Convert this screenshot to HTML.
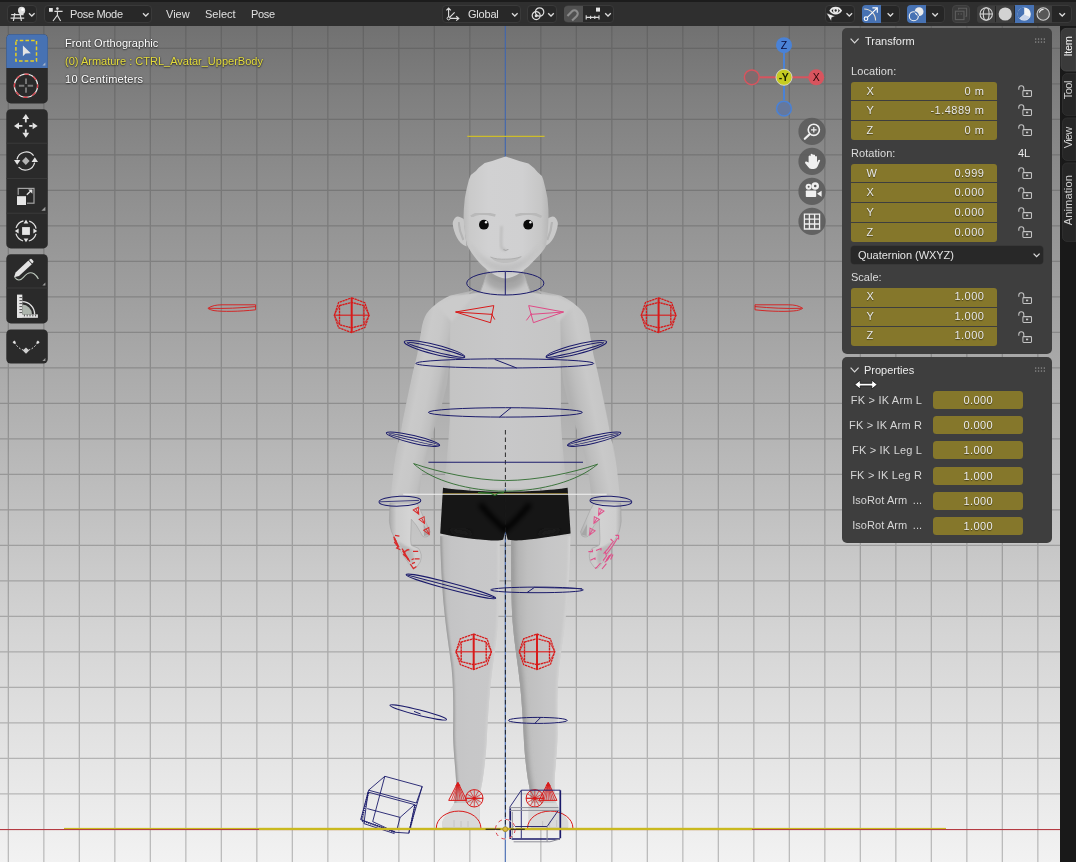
<!DOCTYPE html>
<html>
<head>
<meta charset="utf-8">
<title>Blender</title>
<style>
html,body{margin:0;padding:0;}
body{width:1076px;height:862px;overflow:hidden;position:relative;background:#808080;font-family:"Liberation Sans",sans-serif;font-size:12px;color:#e6e6e6;}
#vp{position:absolute;left:0;top:0;width:1076px;height:862px;}
#hdr{position:absolute;left:0;top:0;width:1076px;height:26px;background:#2f2f2f;}
.hb{position:absolute;top:5px;height:18px;background:#282828;border-radius:4px;box-sizing:border-box;border:1px solid #3a3a3a;}
.ht{position:absolute;top:7px;font-size:11px;line-height:14px;color:#e0e0e0;white-space:nowrap;}
.abs{position:absolute;}
.ht,.lbl,.vt,.fld,.pf,.pl,svg.abs{will-change:transform;}
.vt{font-size:11px;line-height:14px;color:#ffffff;white-space:nowrap;text-shadow:0 0 2px rgba(0,0,0,.6),0 1px 1.5px rgba(0,0,0,.55);}
/* toolbar */
.tg{position:absolute;left:6px;width:40px;background:#2b2b2b;border-radius:4px;}
/* N panel */
.pn{position:absolute;left:842px;width:210px;background:#3e3e3e;border-radius:5px;}
.lbl{position:absolute;font-size:11px;line-height:14px;color:#dcdcdc;white-space:nowrap;}
.fld{position:absolute;left:850.9px;width:146px;height:18px;background:#85772b;}
.fld .l{position:absolute;left:15.4px;top:1.7px;font-size:11px;text-shadow:0 1px 1px rgba(0,0,0,.45);line-height:14px;color:#e8e8e8;}
.fld .r{position:absolute;right:12.6px;top:1.7px;font-size:11px;letter-spacing:0.5px;line-height:14px;color:#e8e8e8;text-shadow:0 1px 1px rgba(0,0,0,.5);}
.fld.s2 .l,.fld.s2 .r{top:1.1px;}
.pf{position:absolute;left:933px;width:90px;height:17.7px;background:#85772b;border-radius:3.5px;text-align:center;font-size:11px;line-height:18px;letter-spacing:0.4px;text-indent:0.4px;color:#ececec;text-shadow:0 1px 1px rgba(0,0,0,.5);}
.pl{position:absolute;width:82px;left:842px;text-align:right;font-size:11px;line-height:14px;color:#d6d6d6;white-space:nowrap;}
#tabs{position:absolute;left:1060px;top:26px;width:16px;height:836px;background:#191919;}
.tab{position:absolute;left:1061px;width:15px;color:#d0d0d0;font-size:12px;}
.tab span{position:absolute;left:0;top:0;transform-origin:0 0;white-space:nowrap;line-height:15px;}
</style>
</head>
<body>
<svg id="vp" width="1076" height="862" viewBox="0 0 1076 862">
<defs>
<linearGradient id="bg" gradientUnits="userSpaceOnUse" x1="0" y1="0" x2="0" y2="862">
<stop offset="0.0000" stop-color="#6d6d6d"/>
<stop offset="0.0302" stop-color="#717171"/>
<stop offset="0.0464" stop-color="#747474"/>
<stop offset="0.1160" stop-color="#808080"/>
<stop offset="0.2378" stop-color="#919191"/>
<stop offset="0.4872" stop-color="#b2b2b2"/>
<stop offset="0.7309" stop-color="#d4d4d4"/>
<stop offset="0.9803" stop-color="#f0f0f0"/>
<stop offset="1.0000" stop-color="#f2f2f2"/>
</linearGradient>
</defs>
<rect x="0" y="0" width="1076" height="862" fill="url(#bg)"/>
<g stroke="#484848" stroke-opacity="0.31" stroke-width="1.3" fill="none">
<path d="M-27.15 26V862M8.35 26V862M43.85 26V862M79.35 26V862M114.85 26V862M150.35 26V862M185.85 26V862M221.35 26V862M256.85 26V862M292.35 26V862M327.85 26V862M363.35 26V862M398.85 26V862M434.35 26V862M469.85 26V862M540.85 26V862M576.35 26V862M611.85 26V862M647.35 26V862M682.85 26V862M718.35 26V862M753.85 26V862M789.35 26V862M824.85 26V862M860.35 26V862M895.85 26V862M931.35 26V862M966.85 26V862M1002.35 26V862M1037.85 26V862M1073.35 26V862M0 864.85H1076M0 793.85H1076M0 758.35H1076M0 722.85H1076M0 687.35H1076M0 651.85H1076M0 616.35H1076M0 580.85H1076M0 545.35H1076M0 509.85H1076M0 474.35H1076M0 438.85H1076M0 403.35H1076M0 367.85H1076M0 332.35H1076M0 296.85H1076M0 261.35H1076M0 225.85H1076M0 190.35H1076M0 154.85H1076M0 119.35H1076M0 83.85H1076M0 48.35H1076"/>
</g>
<line x1="505.3" y1="26" x2="505.3" y2="862" stroke="#3f66b0" stroke-width="1.1"/>
<line x1="467.3" y1="136.3" x2="544.6" y2="136.3" stroke="#cdbd2a" stroke-width="1.2"/>
<!--BODY_START-->
<defs>
<linearGradient id="gLegL" gradientUnits="userSpaceOnUse" x1="438" y1="0" x2="502" y2="0">
<stop offset="0" stop-color="#a6a6a6"/><stop offset="0.06" stop-color="#bababa"/><stop offset="0.2" stop-color="#c4c4c5"/><stop offset="0.5" stop-color="#c7c7c8"/><stop offset="0.9" stop-color="#c8c8c9"/><stop offset="1" stop-color="#cecece"/>
</linearGradient>
<linearGradient id="gLegR" gradientUnits="userSpaceOnUse" x1="502.6" y1="0" x2="437.6" y2="0">
<stop offset="0" stop-color="#9e9e9e"/><stop offset="0.1" stop-color="#b0b0b0"/><stop offset="0.3" stop-color="#bfbfbf"/><stop offset="0.6" stop-color="#c6c6c7"/><stop offset="0.9" stop-color="#c9c9c9"/><stop offset="1" stop-color="#d0d0d0"/>
</linearGradient>
<linearGradient id="gArmL" gradientUnits="userSpaceOnUse" x1="-2" y1="0" x2="32" y2="0" gradientTransform="translate(424 317) rotate(11.5)">
<stop offset="0" stop-color="#aeaeae"/><stop offset="0.07" stop-color="#c1c1c1"/><stop offset="0.3" stop-color="#cacaca"/><stop offset="0.6" stop-color="#c8c8c8"/><stop offset="0.85" stop-color="#c0c0c0"/><stop offset="1" stop-color="#b4b4b4"/>
</linearGradient>
<linearGradient id="gArmR" gradientUnits="userSpaceOnUse" x1="32" y1="0" x2="-2" y2="0" gradientTransform="translate(424 317) rotate(11.5)">
<stop offset="0" stop-color="#b2b2b2"/><stop offset="0.25" stop-color="#bebebe"/><stop offset="0.6" stop-color="#c9c9c9"/><stop offset="0.92" stop-color="#c6c6c6"/><stop offset="1" stop-color="#adadad"/>
</linearGradient>
<linearGradient id="gHandL" gradientUnits="userSpaceOnUse" x1="389" y1="0" x2="430" y2="0">
<stop offset="0" stop-color="#a8a8a8"/><stop offset="0.18" stop-color="#cccccc"/><stop offset="0.5" stop-color="#d4d4d4"/><stop offset="0.85" stop-color="#cacaca"/><stop offset="1" stop-color="#b0b0b0"/>
</linearGradient>
<linearGradient id="gHandR" gradientUnits="userSpaceOnUse" x1="430.6" y1="0" x2="388.6" y2="0">
<stop offset="0" stop-color="#b0b0b0"/><stop offset="0.2" stop-color="#c6c6c6"/><stop offset="0.5" stop-color="#d2d2d2"/><stop offset="0.85" stop-color="#cecece"/><stop offset="1" stop-color="#acacac"/>
</linearGradient>
<linearGradient id="gTorso" gradientUnits="userSpaceOnUse" x1="443" y1="0" x2="567.6" y2="0">
<stop offset="0" stop-color="#bababa"/><stop offset="0.07" stop-color="#c4c4c4"/><stop offset="0.5" stop-color="#c8c8c9"/><stop offset="0.93" stop-color="#c5c5c5"/><stop offset="1" stop-color="#bcbcbc"/>
</linearGradient>
<linearGradient id="gHead" gradientUnits="userSpaceOnUse" x1="463" y1="0" x2="548" y2="0">
<stop offset="0" stop-color="#bcbcbc"/><stop offset="0.08" stop-color="#cacaca"/><stop offset="0.3" stop-color="#d1d1d2"/><stop offset="0.7" stop-color="#d0d0d1"/><stop offset="0.92" stop-color="#c6c6c6"/><stop offset="1" stop-color="#b8b8b8"/>
</linearGradient>
<linearGradient id="gNeck" gradientUnits="userSpaceOnUse" x1="0" y1="272" x2="0" y2="300">
<stop offset="0" stop-color="#a8a8a8"/><stop offset="0.45" stop-color="#b8b8b8"/><stop offset="1" stop-color="#cacaca"/>
</linearGradient>
<filter id="b1" x="-20%" y="-20%" width="140%" height="140%"><feGaussianBlur stdDeviation="1.2"/></filter>
<filter id="b2" x="-30%" y="-30%" width="160%" height="160%"><feGaussianBlur stdDeviation="2.5"/></filter>
<filter id="b05" x="-10%" y="-10%" width="120%" height="120%"><feGaussianBlur stdDeviation="0.5"/></filter>
</defs>
<!-- limbs -->
<g>
<!-- leg -->
<path d="M440.2 536C440.6 560 442 585 443.6 604C446 630 449.4 650 451.6 668C453.6 690 453.4 712 453 734C453.4 752 455.4 768 456 780C456.4 790 455.4 798 454 804C450 812 443.6 817 442.6 822V828.6H479.8V822C480.4 814 479.4 808 479.6 800C480.4 790 482 784 482.8 779C485 764 486.4 750 487 734C488 716 489 700 490.6 684C492.6 664 496.4 644 498 622C499.4 600 499.6 570 499.6 540.6L470 537Z" fill="url(#gLegL)"/>
<!-- arm -->
<path d="M474 290.2L449.8 295.8C444 298.4 439.6 301.4 435 305C430.4 308.6 426.6 312.6 424.8 317.1C422.6 322 421.6 327 421 332C419.6 340 418.4 347 417.3 354.3L412.7 372.8L407.1 398.8L402.5 421L399.7 439.6L396 447.8L392.3 481.3L389.9 506H416L419.2 499.8C420 484 422.6 470 425.7 457C428 447 431 438 434 429.3L441.5 406.2L447 384L449.8 359.8L452 330L460 300Z" fill="url(#gArmL)"/>
<!-- hand -->
<path d="M389.9 503L389.4 521.3C389.8 525 390.6 528.6 391.5 531.7L395.7 540L400.9 551.6L407.1 561L412.3 567.7C413.8 568.6 415.4 568.4 416.5 567.2L420.2 562C421 559.6 421.4 557 421.2 554.7C420.6 552.2 419.8 550.2 418.6 548.4L411.3 545.3C410.6 542 410.6 538.6 410.8 535L411.3 519.2L416.5 525.5L422.8 536.4C425 537.6 427.4 537 429 535.4L430.1 531.7L424.9 520.3L420.2 509.8L416.4 503Z" fill="url(#gHandL)" stroke="#a0a0a0" stroke-opacity="0.7" stroke-width="0.8"/>
<path d="M396.6 541C400 548 405 556 411.6 565.6C414 561 414.6 556 412.6 549.6Z" fill="#b2b2b2" filter="url(#b1)" opacity="0.8"/>
<path d="M423.6 524L429 534.6L424 536Z" fill="#a6a6a6" filter="url(#b05)"/>
</g>
<g transform="translate(1010.6 0) scale(-1 1)">
<!-- leg -->
<path d="M440.2 536C440.6 560 442 585 443.6 604C446 630 449.4 650 451.6 668C453.6 690 453.4 712 453 734C453.4 752 455.4 768 456 780C456.4 790 455.4 798 454 804C450 812 443.6 817 442.6 822V828.6H479.8V822C480.4 814 479.4 808 479.6 800C480.4 790 482 784 482.8 779C485 764 486.4 750 487 734C488 716 489 700 490.6 684C492.6 664 496.4 644 498 622C499.4 600 499.6 570 499.6 540.6L470 537Z" fill="url(#gLegR)"/>
<!-- arm -->
<path d="M474 290.2L449.8 295.8C444 298.4 439.6 301.4 435 305C430.4 308.6 426.6 312.6 424.8 317.1C422.6 322 421.6 327 421 332C419.6 340 418.4 347 417.3 354.3L412.7 372.8L407.1 398.8L402.5 421L399.7 439.6L396 447.8L392.3 481.3L389.9 506H416L419.2 499.8C420 484 422.6 470 425.7 457C428 447 431 438 434 429.3L441.5 406.2L447 384L449.8 359.8L452 330L460 300Z" fill="url(#gArmR)"/>
<!-- hand -->
<path d="M389.9 503L389.4 521.3C389.8 525 390.6 528.6 391.5 531.7L395.7 540L400.9 551.6L407.1 561L412.3 567.7C413.8 568.6 415.4 568.4 416.5 567.2L420.2 562C421 559.6 421.4 557 421.2 554.7C420.6 552.2 419.8 550.2 418.6 548.4L411.3 545.3C410.6 542 410.6 538.6 410.8 535L411.3 519.2L416.5 525.5L422.8 536.4C425 537.6 427.4 537 429 535.4L430.1 531.7L424.9 520.3L420.2 509.8L416.4 503Z" fill="url(#gHandR)" stroke="#a0a0a0" stroke-opacity="0.7" stroke-width="0.8"/>
<path d="M396.6 541C400 548 405 556 411.6 565.6C414 561 414.6 556 412.6 549.6Z" fill="#b2b2b2" filter="url(#b1)" opacity="0.8"/>
<path d="M423.6 524L429 534.6L424 536Z" fill="#a6a6a6" filter="url(#b05)"/>
</g>
<clipPath id="cLegL"><path d="M440.2 536C440.6 560 442 585 443.6 604C446 630 449.4 650 451.6 668C453.6 690 453.4 712 453 734C453.4 752 455.4 768 456 780C456.4 790 455.4 798 454 804C450 812 443.6 817 442.6 822V828.6H479.8V822C480.4 814 479.4 808 479.6 800C480.4 790 482 784 482.8 779C485 764 486.4 750 487 734C488 716 489 700 490.6 684C492.6 664 496.4 644 498 622C499.4 600 499.6 570 499.6 540.6L470 537Z"/></clipPath>
<clipPath id="cLegR"><path d="M440.2 536C440.6 560 442 585 443.6 604C446 630 449.4 650 451.6 668C453.6 690 453.4 712 453 734C453.4 752 455.4 768 456 780C456.4 790 455.4 798 454 804C450 812 443.6 817 442.6 822V828.6H479.8V822C480.4 814 479.4 808 479.6 800C480.4 790 482 784 482.8 779C485 764 486.4 750 487 734C488 716 489 700 490.6 684C492.6 664 496.4 644 498 622C499.4 600 499.6 570 499.6 540.6L470 537Z" transform="translate(1010.6 0) scale(-1 1)"/></clipPath>
<g clip-path="url(#cLegL)">
<path d="M440.2 536C440.6 560 442 585 443.6 604C446 630 449.4 650 451.6 668C453.6 690 453.4 712 453 734C453.4 752 455.4 768 456 780C456.4 790 455.4 798 454 804" stroke="#9a9a9a" stroke-width="3.2" fill="none" filter="url(#b1)"/>
<path d="M499.6 540.6C499.6 570 499.4 600 498 622C496.4 644 492.6 664 490.6 684C489 700 488 716 487 734C486.4 750 485 764 482.8 779C482 784 480.4 790 479.6 800" stroke="#d2d2d2" stroke-width="2.4" fill="none" filter="url(#b1)"/>
</g>
<g clip-path="url(#cLegR)">
<path d="M499.6 540.6C499.6 570 499.4 600 498 622C496.4 644 492.6 664 490.6 684C489 700 488 716 487 734C486.4 750 485 764 482.8 779C482 784 480.4 790 479.6 800" transform="translate(1010.6 0) scale(-1 1)" stroke="#979797" stroke-width="6" fill="none" filter="url(#b2)"/>
<path d="M499.6 540.6C499.6 570 499.4 600 498 622C496.4 644 492.6 664 490.6 684C489 700 488 716 487 734C486.4 750 485 764 482.8 779C482 784 480.4 790 479.6 800" transform="translate(1010.6 0) scale(-1 1)" stroke="#a0a0a0" stroke-width="2.4" fill="none" filter="url(#b1)"/>
<path d="M440.2 536C440.6 560 442 585 443.6 604C446 630 449.4 650 451.6 668C453.6 690 453.4 712 453 734C453.4 752 455.4 768 456 780C456.4 790 455.4 798 454 804" transform="translate(1010.6 0) scale(-1 1)" stroke="#d4d4d4" stroke-width="2.6" fill="none" filter="url(#b1)"/>
</g>
<!-- feet -->
<path d="M454.4 803C450 811 443.8 816.6 442.2 822V827.6H479.8V822C480.2 815 479.6 809 479.8 803Z" fill="#d9d9d9" filter="url(#b05)"/>
<path d="M556.2 803C560.6 811 566.8 816.6 568.4 822V827.6H528.4V822C528 815 528.6 809 528.4 803Z" fill="#d9d9d9" filter="url(#b05)"/>
<path d="M454 820V827M461 821V827M468 821V827M556.6 820V827M549.6 821V827M542.6 821V827" stroke="#c2c2c2" stroke-width="0.9" filter="url(#b05)"/>
<path d="M442.4 826.8H479.8M528.4 826.8H568.2" stroke="#b0b0b0" stroke-width="1.2" filter="url(#b05)"/>
<!-- torso -->
<path d="M486.8 268L486.8 274.7C484.6 281 482 287 480 292.8L452 296.6C449.6 318 449.8 340 449.8 359.8C449.8 380 449.4 400 449.8 420C449 434 448 446 447 457C446 468 445 476 444.3 481.3L443 488.5H567.6L566.3 481.3C565.6 476 564.6 468 563.6 457C562.6 446 561.6 434 560.8 420C561.2 400 560.8 380 560.8 359.8C560.8 340 561 318 558.6 296.6L530.6 292.8C528.6 287 526 281 523.8 274.7L523.8 268Z" fill="url(#gTorso)"/>
<!-- shoulder caps to hide seams -->
<path d="M480 292.6L452 296.4L436 305L452 322L470 300Z" fill="#cbcbcb" filter="url(#b1)"/>
<path d="M530.6 292.6L558.6 296.4L574.6 305L558.6 322L540.6 300Z" fill="#cbcbcb" filter="url(#b1)"/>
<!-- neck shadow -->
<clipPath id="cNeck"><path d="M486.8 262H523.8V274.7C526 281 528.6 287 530.6 292.8L538 300H472.6L480 292.8C482 287 484.6 281 486.8 274.7Z"/></clipPath>
<g clip-path="url(#cNeck)">
<ellipse cx="505.3" cy="276" rx="21" ry="15" fill="#a6a6a6" filter="url(#b2)"/>
<ellipse cx="505.3" cy="274" rx="16" ry="9" fill="#9e9e9e" filter="url(#b1)"/>
</g>
<path d="M486.6 275C484.6 281 482.4 286.6 480.2 292.4M524 275C526 281 528.2 286.6 530.4 292.4" stroke="#b2b2b2" stroke-width="1" fill="none" filter="url(#b05)"/>
<!-- shorts -->
<path d="M443 487.8C460 490.4 480 491.6 505.3 491.8C530 491.6 550.6 490.4 567.6 487.8L570.6 533.6C556 536 540 538.6 524 540C516 540.6 510 540.6 507.6 539.6L505.4 530.6L503.2 539.6C500.6 540.8 494 540.8 486 540C470 538.8 454 536.4 440.2 533.4Z" fill="#141414" filter="url(#b05)"/>
<path d="M480 504C488 514 496 522 505.3 530C514 522 522 514 530 504" stroke="#060606" stroke-width="5" fill="none" filter="url(#b2)"/><path d="M452 530L470 534M558 530L540 534" stroke="#1e1e1e" stroke-width="4" fill="none" filter="url(#b2)"/>
<!-- head -->
<path d="M463.8 219C460 216.4 457.4 215.8 456 217C453.4 219.4 452.6 222 452.7 224C453.2 229 455 234 457 237.7C459 241.6 462 244.6 466.6 246.4Z" fill="#c9c9c9"/>
<path d="M546.8 219C550.6 216.4 553.2 215.8 554.6 217C557.2 219.4 558 222 557.9 224C557.4 229 555.6 234 553.6 237.7C551.6 241.6 548.6 244.6 544 246.4Z" fill="#c9c9c9"/>
<path d="M458.6 222C459 228 460.6 234 463.4 240" stroke="#b4b4b4" stroke-width="2.2" fill="none" filter="url(#b05)"/>
<path d="M552 222C551.6 228 550 234 547.2 240" stroke="#b4b4b4" stroke-width="2.2" fill="none" filter="url(#b05)"/>
<path d="M505.65 156.6L498.7 158.8L492.2 161L484.7 163L478.7 167.7L475.9 170.9L470.8 175.1L468.9 179.7L466.6 189L464.8 198.3L463.8 209.5L463.6 216.6C463.8 226 465 236 466.8 244.3C468.4 248 470.4 251 472.5 254C475.4 258 478.6 262 482.2 265.4C485.6 268.6 489.4 271.6 493.6 274.3C497 276.6 501 278.2 505.3 278.6C509.6 278.2 513.6 276.6 517.2 274.8C521.4 272 525.2 269 528.6 266.2C532.2 262.6 535.6 259 539 255.6C541.6 252.6 544 249.6 546 245.9C547.6 236 548.4 226 548.5 216.6L548.4 209.5L547.5 198.3L545.6 189L543.3 179.7L541.9 176L537.7 172.3L534 168.1L528.4 163.5L520 161.2L512.6 158.8Z" fill="url(#gHead)"/>
<!-- face shading -->
<path d="M468 240C472 252 480 262 492 270L505 274L518 270C530 262 538 252 542 240C536 252 524 262 505.3 264C486 262 474 252 468 240Z" fill="#bcbcbc" filter="url(#b2)" opacity="0.8"/>
<!-- eyebrows -->
<path d="M470.9 216.6C474 214.4 477 213.6 480.6 213.4C485.6 213.4 490.6 214 495.4 215.4" stroke="#b9b9b9" stroke-width="2.6" fill="none" filter="url(#b05)"/>
<path d="M515.4 215.4C520.2 214 525.2 213.4 530.2 213.4C533.8 213.6 536.8 214.4 541.6 216.8" stroke="#b9b9b9" stroke-width="2.6" fill="none" filter="url(#b05)"/>
<!-- eyes -->
<circle cx="483.9" cy="224.7" r="4.9" fill="#0a0a0a"/><circle cx="528.2" cy="224.7" r="4.9" fill="#0a0a0a"/>
<circle cx="486" cy="222.2" r="1.2" fill="#f4f4f4"/><circle cx="530.4" cy="222.2" r="1.2" fill="#f4f4f4"/>
<!-- nose -->
<path d="M501.6 226C501 236 500.6 242 501.4 247.4C502.6 249.4 504 250 505.8 250" stroke="#bdbdbd" stroke-width="2.4" fill="none" filter="url(#b1)"/>
<path d="M503.4 249.4L505.8 250.4L508.4 249.2" stroke="#a8a8a8" stroke-width="1.1" fill="none" filter="url(#b05)"/>
<!-- mouth -->
<path d="M490.4 257C495 259.2 500 259.6 505.8 259.4C511.6 259.4 516.6 258.6 521.4 256.6C517.6 261.4 512 263 505.8 263C499.6 263 494 261.6 490.4 257Z" fill="#bebebe" filter="url(#b05)"/>
<path d="M490.4 257C495 259 500 259.4 505.8 259.2C511.6 259.2 516.6 258.4 521.4 256.6" stroke="#aaaaaa" stroke-width="0.9" fill="none" filter="url(#b05)"/>
<!--BODY_END-->
<!--RIG_START-->
<path d="M505.4 430V829" stroke="#1a1a1a" stroke-width="0.9" stroke-dasharray="4.5 3" fill="none"/>
<path d="M403.2 494.2L606.7 494.2" stroke="#f2f2f2" stroke-width="1.1" fill="none"/>
<path d="M443 493.4H567.6" stroke="#b89a3a" stroke-width="0.8" opacity="0.8"/>
<path d="M428.4 462.3L583 462.3" stroke="#1b1b6b" stroke-width="1.1" fill="none"/>
<path d="M413.6 463.6C432 481 470 491 505.3 491.2C542 491 578 481 597.6 464.2M413.6 463.6C440 472.6 475 480.2 505.3 480.6C538 480.2 572 473 597.6 464.2" stroke="#2f6b2f" stroke-width="1" fill="none" opacity="0.9"/>
<path d="M478 492.6L491 493.4L495 495.4L498 493.2L504 492.6" fill="none" stroke="#2b7a2b" stroke-width="1.1"/>
<ellipse cx="505.3" cy="283.2" rx="38.6" ry="11.8" fill="none" stroke="#1b1b6b" stroke-width="1.0"/>
<path d="M505.3 271.6L505.3 295" stroke="#1b1b6b" stroke-width="1.0" fill="none"/>
<ellipse cx="434.5" cy="349.3" rx="31.2" ry="4.8" fill="none" stroke="#1b1b6b" stroke-width="1.0" transform="rotate(14 434.5 349.3)"/>
<ellipse cx="436.0" cy="349.9" rx="29.6" ry="2.2" fill="none" stroke="#1b1b6b" stroke-width="1.0" transform="rotate(14 436.0 349.9)"/>
<ellipse cx="576.4" cy="349.3" rx="31.2" ry="4.8" fill="none" stroke="#1b1b6b" stroke-width="1.0" transform="rotate(-14 576.4 349.3)"/>
<ellipse cx="574.9" cy="349.9" rx="29.6" ry="2.2" fill="none" stroke="#1b1b6b" stroke-width="1.0" transform="rotate(-14 574.9 349.9)"/>
<ellipse cx="504.8" cy="363.4" rx="88.9" ry="4.6" fill="none" stroke="#1b1b6b" stroke-width="1.0"/>
<path d="M494.7 359.4L516.7 368" stroke="#1b1b6b" stroke-width="1.0" fill="none"/>
<ellipse cx="505.4" cy="412.4" rx="77" ry="4.7" fill="none" stroke="#1b1b6b" stroke-width="1.0"/>
<path d="M499.4 417.2L511 407.7" stroke="#1b1b6b" stroke-width="1.0" fill="none"/>
<ellipse cx="413" cy="439.2" rx="27.4" ry="3.8" fill="none" stroke="#1b1b6b" stroke-width="1.0" transform="rotate(13.2 413 439.2)"/>
<ellipse cx="414.2" cy="439.6" rx="26" ry="1.3" fill="none" stroke="#1b1b6b" stroke-width="1.0" transform="rotate(13.2 414.2 439.6)"/>
<ellipse cx="594.2" cy="439.2" rx="27.4" ry="3.8" fill="none" stroke="#1b1b6b" stroke-width="1.0" transform="rotate(-13.2 594.2 439.2)"/>
<ellipse cx="593.0" cy="439.6" rx="26" ry="1.3" fill="none" stroke="#1b1b6b" stroke-width="1.0" transform="rotate(-13.2 593.0 439.6)"/>
<ellipse cx="399.9" cy="501.2" rx="20.9" ry="4.9" fill="none" stroke="#1b1b6b" stroke-width="1.0" transform="rotate(-2 399.9 501.2)"/>
<ellipse cx="610.9" cy="501.2" rx="20.9" ry="4.9" fill="none" stroke="#1b1b6b" stroke-width="1.0" transform="rotate(2 610.9 501.2)"/>
<path d="M380 501.8L419 500.4" stroke="#1b1b6b" stroke-width="0.8" fill="none"/>
<path d="M591 500.4L631 501.8" stroke="#1b1b6b" stroke-width="0.8" fill="none"/>
<ellipse cx="450.9" cy="586.4" rx="46.4" ry="3.2" fill="none" stroke="#1b1b6b" stroke-width="1.0" transform="rotate(14.8 450.9 586.4)"/>
<path d="M406.5 574.8L495.4 598" stroke="#1b1b6b" stroke-width="1.0" fill="none"/>
<ellipse cx="537" cy="589.9" rx="46.3" ry="2.8" fill="none" stroke="#1b1b6b" stroke-width="1.0"/>
<path d="M527 592.6L534.4 587.4" stroke="#1b1b6b" stroke-width="1.0" fill="none"/>
<path d="M534.4 587.4L582 588.6" stroke="#1b1b6b" stroke-width="0.8" fill="none"/>
<ellipse cx="418.2" cy="712.4" rx="29.2" ry="2.7" fill="none" stroke="#1b1b6b" stroke-width="1.0" transform="rotate(14.2 418.2 712.4)"/>
<path d="M414 711.4L420.6 714" stroke="#1b1b6b" stroke-width="1.0" fill="none"/>
<ellipse cx="537.8" cy="720.4" rx="29.4" ry="3" fill="none" stroke="#1b1b6b" stroke-width="1.0"/>
<path d="M535 723.2L540.6 717.6" stroke="#1b1b6b" stroke-width="1.0" fill="none"/>
<path d="M455.6 312L493.8 305.6L490.5 322.7ZM455.6 312L492.2 314.4M491.4 313.6L494.8 319.6" stroke="#d81a1a" stroke-width="1" fill="none"/>
<path d="M563.5 312L528.7 305.6L533.4 322.7ZM563.5 312L530.6 314.4M531.6 313.4L526.4 320.4" stroke="#e04a86" stroke-width="1" fill="none"/>
<path d="M351.7 297.8L364.8 302.7L369.1 315.2L364.9 327.4L351.7 332.6L338.6 327.7L334.3 315.2L338.6 302.5Z" stroke="#d81a1a" stroke-width="1.25" fill="none" stroke-dasharray="2.4 0.6"/>
<path d="M339.5 305.6L351.7 302.4L363.9 305.6L363.9 324.8L351.7 327.8L339.5 324.8Z" stroke="#d81a1a" stroke-width="1.35" fill="none" stroke-dasharray="2.4 0.5"/>
<path d="M351.7 297.8V332.6" stroke="#d81a1a" stroke-width="2"/>
<path d="M334.3 315.2H369.1" stroke="#d81a1a" stroke-width="1.5" opacity="0.75"/>
<path d="M339.5 305.6L334.3 315.2L339.5 324.8M363.9 305.6L369.1 315.2L363.9 324.8" stroke="#d81a1a" stroke-width="0.8" fill="none"/>
<path d="M658.6 297.8L671.7 302.7L676.0 315.2L671.8 327.4L658.6 332.6L645.5 327.7L641.2 315.2L645.5 302.5Z" stroke="#d81a1a" stroke-width="1.25" fill="none" stroke-dasharray="2.4 0.6"/>
<path d="M646.4 305.6L658.6 302.4L670.8 305.6L670.8 324.8L658.6 327.8L646.4 324.8Z" stroke="#d81a1a" stroke-width="1.35" fill="none" stroke-dasharray="2.4 0.5"/>
<path d="M658.6 297.8V332.6" stroke="#d81a1a" stroke-width="2"/>
<path d="M641.2 315.2H676.0" stroke="#d81a1a" stroke-width="1.5" opacity="0.75"/>
<path d="M646.4 305.6L641.2 315.2L646.4 324.8M670.8 305.6L676.0 315.2L670.8 324.8" stroke="#d81a1a" stroke-width="0.8" fill="none"/>
<path d="M473.7 634.0L487.1 639.0L491.5 651.8L487.2 664.3L473.7 669.6L460.3 664.6L455.9 651.8L460.3 638.8Z" stroke="#d81a1a" stroke-width="1.25" fill="none" stroke-dasharray="2.4 0.6"/>
<path d="M461.2 642.0L473.7 638.7L486.2 642.0L486.2 661.6L473.7 664.7L461.2 661.6Z" stroke="#d81a1a" stroke-width="1.35" fill="none" stroke-dasharray="2.4 0.5"/>
<path d="M473.7 634.0V669.6" stroke="#d81a1a" stroke-width="2"/>
<path d="M455.9 651.8H491.5" stroke="#d81a1a" stroke-width="1.5" opacity="0.75"/>
<path d="M461.2 642.0L455.9 651.8L461.2 661.6M486.2 642.0L491.5 651.8L486.2 661.6" stroke="#d81a1a" stroke-width="0.8" fill="none"/>
<path d="M537.0 634.0L550.4 639.0L554.8 651.8L550.5 664.3L537.0 669.6L523.6 664.6L519.2 651.8L523.6 638.8Z" stroke="#d81a1a" stroke-width="1.25" fill="none" stroke-dasharray="2.4 0.6"/>
<path d="M524.5 642.0L537.0 638.7L549.5 642.0L549.5 661.6L537.0 664.7L524.5 661.6Z" stroke="#d81a1a" stroke-width="1.35" fill="none" stroke-dasharray="2.4 0.5"/>
<path d="M537 634.0V669.6" stroke="#d81a1a" stroke-width="2"/>
<path d="M519.2 651.8H554.8" stroke="#d81a1a" stroke-width="1.5" opacity="0.75"/>
<path d="M524.5 642.0L519.2 651.8L524.5 661.6M549.5 642.0L554.8 651.8L549.5 661.6" stroke="#d81a1a" stroke-width="0.8" fill="none"/>
<path d="M207.9 308.3C212 305.6 216 304.9 222 304.8H255.6V309.8C240 311.6 222 311.8 214 310.6C211 310 209 309.2 207.9 308.3ZM209 308.3C225 308.8 240 308 255.6 306.6" stroke="#d81a1a" stroke-width="0.9" fill="none"/>
<path d="M802.7 308.3C798.6 305.6 794.6 304.9 788.6 304.8H755V309.8C770.6 311.6 788.6 311.8 796.6 310.6C799.6 310 801.6 309.2 802.7 308.3ZM801.6 308.3C785.6 308.8 770.6 308 755 306.6" stroke="#d81a1a" stroke-width="0.9" fill="none"/>
<path d="M457.9 782.3L448.7 800.4H466.7Z" stroke="#d81a1a" stroke-width="1" fill="none"/>
<path d="M457.9 783L451.4 800.4M457.9 783L453.7 800.4M457.9 783L455.7 800.4M457.9 783L457.9 800.4M457.9 783L460.09999999999997 800.4M457.9 783L462.09999999999997 800.4M457.9 783L464.4 800.4" stroke="#d81a1a" stroke-width="0.75" fill="none"/>
<path d="M455.29999999999995 786L457.9 782L460.5 786Z" fill="#d81a1a"/>
<circle cx="474.3" cy="798.3" r="8.7" stroke="#d81a1a" stroke-width="1" fill="none"/>
<path d="M474.3 798.3L483.0 798.3M474.3 798.3L481.8 802.6M474.3 798.3L478.7 805.8M474.3 798.3L474.3 807.0M474.3 798.3L469.9 805.8M474.3 798.3L466.8 802.6M474.3 798.3L465.6 798.3M474.3 798.3L466.8 793.9M474.3 798.3L469.9 790.8M474.3 798.3L474.3 789.6M474.3 798.3L478.7 790.8M474.3 798.3L481.8 793.9" stroke="#d81a1a" stroke-width="0.7" fill="none"/>
<circle cx="474.3" cy="798.3" r="1.6" fill="#d81a1a"/>
<path d="M465.6 798.3H483" stroke="#d81a1a" stroke-width="1"/>
<path d="M548.2 782.3L539.0 800.4H557.0Z" stroke="#d81a1a" stroke-width="1" fill="none"/>
<path d="M548.2 783L541.7 800.4M548.2 783L544.0 800.4M548.2 783L546.0 800.4M548.2 783L548.2 800.4M548.2 783L550.4000000000001 800.4M548.2 783L552.4000000000001 800.4M548.2 783L554.7 800.4" stroke="#d81a1a" stroke-width="0.75" fill="none"/>
<path d="M545.6 786L548.2 782L550.8000000000001 786Z" fill="#d81a1a"/>
<circle cx="534.8" cy="798.3" r="8.7" stroke="#d81a1a" stroke-width="1" fill="none"/>
<path d="M534.8 798.3L543.5 798.3M534.8 798.3L542.3 802.6M534.8 798.3L539.1 805.8M534.8 798.3L534.8 807.0M534.8 798.3L530.4 805.8M534.8 798.3L527.3 802.6M534.8 798.3L526.1 798.3M534.8 798.3L527.3 793.9M534.8 798.3L530.4 790.8M534.8 798.3L534.8 789.6M534.8 798.3L539.1 790.8M534.8 798.3L542.3 793.9" stroke="#d81a1a" stroke-width="0.7" fill="none"/>
<circle cx="534.8" cy="798.3" r="1.6" fill="#d81a1a"/>
<path d="M526 798.3H543.6" stroke="#d81a1a" stroke-width="1"/>
<path d="M436.3 828A22.3 16.9 0 0 1 480.9 828" stroke="#d81a1a" stroke-width="1" fill="none"/>
<path d="M527.6 828A22.65 16.9 0 0 1 572.9 828" stroke="#d81a1a" stroke-width="1" fill="none"/>
<path d="M384.8 776.3L422.2 786.5M384.8 776.3L368.6 790.2M368.6 790.2L416.3 803.0M368.1 792.1L414.9 804.7M422.2 786.5L416.3 803.0M422.2 786.5L409.4 829.9M384.8 776.3L372.7 821.6M368.6 790.2L360.7 819.7M360.7 819.7L395.5 832.3L408.9 833.2M408.9 833.2L409.4 829.9M414.9 804.7L408.9 833.2M367.2 808.6L400.1 817.4L414.0 805.1M400.1 817.4L397.3 828.1M372.7 821.6L395.5 832.3M363.9 823.6L394.5 833.6M368.1 792.1L363.9 823.6" stroke="#1b1b6b" stroke-width="0.9" fill="none"/>
<path d="M368.4 792.8L361.6 819.7M415.4 804.9L409.8 829.9M362.1 820.7L394.5 831.8" stroke="#1b1b6b" stroke-width="1.8" fill="none" stroke-dasharray="1.2 1"/>
<path d="M521.3 790.2L560.3 790.2M521.3 790.2L521.3 838.3M509.5 807.6L521.3 790.2M513.6 826.5L547.1 826.5L558.3 810.4" stroke="#1b1b6b" stroke-width="0.9" fill="none"/>
<path d="M560.3 790.2L560.3 838.3M510.2 808.3L510.2 839.0M511.6 839.0L559.9 839.0" stroke="#1b1b6b" stroke-width="1.7" fill="none"/>
<path d="M509.5 807.6L558.3 807.6M509.5 810.4L558.3 810.4M547.1 826.5L547.1 841.8M513.6 841.8L549.9 841.8L559.9 839.0M512.3 811.8L512.3 838.3" stroke="#8f8f98" stroke-width="1" fill="none"/>
<rect x="0" y="829" width="1076" height="1.1" fill="#b43a42"/>
<rect x="64" y="827.9" width="882" height="1.15" fill="#c9b91f"/>
<rect x="259" y="827.9" width="493" height="2.2" fill="#c9b91f"/>
<circle cx="505.3" cy="829.2" r="9.8" fill="none" stroke="#f4f4f4" stroke-width="1"/>
<circle cx="505.3" cy="829.2" r="9.8" fill="none" stroke="#d8414b" stroke-width="1" stroke-dasharray="3.85 3.85"/>
<path d="M485.6 829.2H500.4M510.4 829.2H524.8" stroke="#141414" stroke-width="1.1"/>
<circle cx="505.3" cy="829.2" r="2.5" fill="#d8b83a" stroke="#8a7420" stroke-width="0.6"/>
<path d="M-2.9 -2.61L2.9 -2.61L0 3.77ZM0 -2.61V3.77" transform="translate(417 510.9) rotate(-28)" stroke="#d82a2a" stroke-width="0.9" fill="none"/>
<path d="M-2.9 -2.61L2.9 -2.61L0 3.77ZM0 -2.61V3.77" transform="translate(422.8 520.3) rotate(-28)" stroke="#d82a2a" stroke-width="0.9" fill="none"/>
<path d="M-2.9 -2.61L2.9 -2.61L0 3.77ZM0 -2.61V3.77" transform="translate(427.5 531.2) rotate(-28)" stroke="#d82a2a" stroke-width="0.9" fill="none"/>
<path d="M-2.9 -2.61L2.9 -2.61L0 3.77ZM0 -2.61V3.77" transform="translate(600.3 511.9) rotate(28)" stroke="#e0508a" stroke-width="0.9" fill="none"/>
<path d="M-2.9 -2.61L2.9 -2.61L0 3.77ZM0 -2.61V3.77" transform="translate(595.6 520.3) rotate(28)" stroke="#e0508a" stroke-width="0.9" fill="none"/>
<path d="M-2.9 -2.61L2.9 -2.61L0 3.77ZM0 -2.61V3.77" transform="translate(591.4 531.7) rotate(28)" stroke="#e0508a" stroke-width="0.9" fill="none"/>
<path d="M393.6 536.6L396 541L394.6 542.6L398 546.6L396.6 548L400.4 549.8M395 535.4L399.4 536.2M402 548.6L405 553L403.6 554.6L407.4 558L409.8 561.6M404.6 551.6L408.6 549.4M410.4 564L413.4 568.6L416.4 566.6M412 563.6L415 562.4M406.4 549.8H409.4M413 551.4H418.2M414.6 558.8H419.6M411.6 559.6L414 558.8" stroke="#d82a2a" stroke-width="1.2" fill="none"/>
<path d="M394.2 538.4L398.8 547.4M402.8 550.6L408.6 560" stroke="#d82a2a" stroke-width="1.8" fill="none"/>
<path d="M615.4 535.4H618.6V539.6M617.6 538L612.6 546L606.6 554M613.6 541L608 548.6L603.6 553.6M610.6 539L612.6 541M611.6 553.6L607.6 560L604.6 562.4M609.6 555L606 560.6M613 554.6L610.6 559.6M606.4 563.6L602 569M600.6 563L596.6 567.6L595 568.4M588.4 551.6H592.4V549.6M596 550.6L601 548.6V550.6M590.4 560.2L595 558V560M605.4 552L606.4 556L603 560.6" stroke="#e0508a" stroke-width="1.1" fill="none"/>
<!--RIG_END-->
</svg>
<!--GIZMO_START-->
<svg class="abs" style="left:730px;top:30px" width="120" height="220" viewBox="0 0 120 220">
<!-- axis lines -->
<path d="M54 43.5V21" stroke="#4a82d6" stroke-width="2"/>
<path d="M54 51V70" stroke="#4a82d6" stroke-width="2"/>
<path d="M62 47.3H80" stroke="#d8545e" stroke-width="2"/>
<path d="M30 47.3H46" stroke="#d8545e" stroke-width="2"/>
<circle cx="21.8" cy="47.3" r="7.4" fill="#7e6c6e" stroke="#d8545e" stroke-width="1.5"/>
<circle cx="54" cy="78.6" r="7.4" fill="#66789c" stroke="#4a82d6" stroke-width="1.5"/>
<circle cx="54" cy="15.2" r="8" fill="#4a82d6"/>
<circle cx="86.2" cy="47.3" r="8" fill="#d8545e"/>
<circle cx="54" cy="47.3" r="8" fill="#c6cc22" stroke="#dcdccc" stroke-width="0.9"/>
<text x="54" y="19.2" font-size="10.5" text-anchor="middle" fill="#0a0a3a" font-family="Liberation Sans">Z</text>
<text x="86.3" y="51.3" font-size="10.5" text-anchor="middle" fill="#2a0608" font-family="Liberation Sans">X</text>
<text x="53.6" y="51.3" font-size="10.5" text-anchor="middle" fill="#1a2000" font-family="Liberation Sans" font-weight="bold" letter-spacing="-0.4">-Y</text>
<!-- nav buttons -->
<g fill="#5a5a5a" fill-opacity="0.86">
<circle cx="82" cy="101.4" r="13.6"/><circle cx="82" cy="131.4" r="13.6"/><circle cx="82" cy="161.4" r="13.6"/><circle cx="82" cy="191.4" r="13.6"/>
</g>
<!-- zoom -->
<circle cx="83.8" cy="99.8" r="5.6" fill="none" stroke="#f0f0f0" stroke-width="1.6"/>
<path d="M83.8 97V102.6M81 99.8H86.6" stroke="#f0f0f0" stroke-width="1.2"/>
<path d="M79.6 104.2L74.8 108.8" stroke="#f0f0f0" stroke-width="2.2" stroke-linecap="round"/>
<!-- hand -->
<path d="M76.4 131.6L78.6 132.6V126.2Q79.6 125 80.6 126.2V124.4Q81.7 123.2 82.8 124.4V125Q83.9 123.8 85 125V126.4Q86 125.4 87 126.6V132.4L88.2 130.2Q89.6 129.2 90.2 130.6L87.6 136.6Q86.6 139 84 139H81.6Q79.4 139 78.2 137L75 133Q75 131.4 76.4 131.6Z" fill="#f0f0f0"/>
<!-- camera -->
<circle cx="78.6" cy="156.8" r="3" fill="#f0f0f0"/><circle cx="85.2" cy="156" r="3.8" fill="#f0f0f0"/>
<rect x="75.8" y="160.4" width="10.4" height="6.6" rx="0.8" fill="#f0f0f0"/>
<path d="M87 163.8L91.6 160.8V166.8Z" fill="#f0f0f0"/>
<circle cx="78.6" cy="156.8" r="1" fill="#5a5a5a"/><circle cx="85.2" cy="156" r="1.3" fill="#5a5a5a"/>
<!-- grid -->
<path d="M74.4 184.2H89.6V199H74.4ZM79.4 184.2V199M84.6 184.2V199M74.4 189.2H89.6M74.4 194H89.6" stroke="#f0f0f0" stroke-width="1.3" fill="none"/>
</svg>
<!--GIZMO_END-->
<!--TOOLBAR_START-->
<!-- viewport text -->
<div class="abs vt" style="left:65.2px;top:36px;letter-spacing:0.06px">Front Orthographic</div>
<div class="abs vt" style="left:65.2px;top:54px;color:#e4dc3c">(0) Armature : CTRL_Avatar_UpperBody</div>
<div class="abs vt" style="left:65.2px;top:72px;letter-spacing:0.27px">10 Centimeters</div>
<!-- toolbar -->
<svg class="abs" style="left:0;top:26px" width="60" height="345" viewBox="0 26 60 345">
<g fill="#2a2a2a">
<rect x="6.3" y="34.2" width="41.5" height="69.2" rx="4.5"/>
<rect x="6.3" y="109.2" width="41.5" height="139.2" rx="4.5"/>
<rect x="6.3" y="254.2" width="41.5" height="69.2" rx="4.5"/>
<rect x="6.3" y="329.4" width="41.5" height="34.1" rx="4.5"/>
</g>
<path d="M6.3 68V38.7A4.5 4.5 0 0 1 10.8 34.2H43.3A4.5 4.5 0 0 1 47.8 38.7V68Z" fill="#4772b3"/>
<path d="M6.3 143.2H47.8M6.3 178.4H47.8M6.3 213.2H47.8M6.3 288H47.8" stroke="#3c3c3c" stroke-width="0.9"/>
<!-- select box -->
<rect x="15.9" y="40.6" width="20.6" height="20.4" fill="none" stroke="#e6cf22" stroke-width="1.5" stroke-dasharray="3.6 2.07" stroke-dashoffset="1.8"/>
<path d="M22.9 45.6V56.2L25.6 53.6L30.8 53.3Z" fill="#e4e4e4"/>
<path d="M45.4 65.6H42.4L45.4 62.6Z" fill="#a9b4c8"/>
<!-- cursor -->
<circle cx="26" cy="85.7" r="11.6" fill="none" stroke="#ececec" stroke-width="1.3"/>
<circle cx="26" cy="85.7" r="11.6" fill="none" stroke="#d8414b" stroke-width="1.3" stroke-dasharray="4.55 4.56" stroke-dashoffset="2"/>
<path d="M26 78.6V84M26 87.4V92.8M18.9 85.7H24.3M27.7 85.7H33.1" stroke="#7a7a7a" stroke-width="1.9"/>
<!-- move -->
<g fill="#e4e4e4">
<path d="M25.8 114L29.2 119H22.4Z"/><path d="M25.8 137.8L29.2 132.8H22.4Z"/><path d="M14 125.9L19 122.5V129.3Z"/><path d="M37.6 125.9L32.6 122.5V129.3Z"/>
<rect x="24.9" y="119" width="1.8" height="3.4"/><rect x="24.9" y="129.4" width="1.8" height="3.4"/><rect x="19" y="125" width="3.4" height="1.8"/><rect x="29.2" y="125" width="3.4" height="1.8"/>
</g>
<!-- rotate -->
<path d="M17 159.4A9.4 9.4 0 0 1 33.6 155.6" stroke="#e4e4e4" stroke-width="1.2" fill="none"/>
<path d="M34.6 162.6A9.4 9.4 0 0 1 18.6 167.2" stroke="#e4e4e4" stroke-width="1.2" fill="none"/>
<path d="M14 160H20.4L17.2 164.8Z" fill="#e4e4e4"/><path d="M31.6 162H38L34.8 157.2Z" fill="#e4e4e4"/>
<path d="M25.8 157L29.6 161L25.8 165L22 161Z" fill="#b4b4b4"/>
<!-- scale -->
<rect x="18.2" y="188.4" width="15.8" height="14.8" fill="none" stroke="#a4a4a4" stroke-width="1.2"/>
<rect x="15.6" y="194.8" width="11.4" height="11.4" fill="#2a2a2a"/>
<rect x="17" y="196.2" width="9" height="8.8" fill="#e6e6e6"/>
<path d="M26.8 194.8L31 190.8" stroke="#e4e4e4" stroke-width="1.3"/>
<path d="M28.2 189.6H32.4V193.8Z" fill="#e4e4e4"/>
<path d="M45.4 210.8H41.4L45.4 206.8Z" fill="#9a9a9a"/>
<!-- transform -->
<circle cx="26" cy="231" r="10.4" fill="none" stroke="#e4e4e4" stroke-width="1.2" stroke-dasharray="10.4 5.94" stroke-dashoffset="-2.97"/>
<rect x="22.1" y="227.1" width="7.8" height="7.8" fill="#e6e6e6"/>
<g fill="#e4e4e4"><path d="M26 219.8L28.4 223.6H23.6Z"/><path d="M26 242.2L28.4 238.4H23.6Z"/><path d="M14.8 231L18.6 228.6V233.4Z"/><path d="M37.2 231L33.4 228.6V233.4Z"/></g>
<!-- annotate -->
<path d="M14.6 277.2C17 280.6 20.4 281 23.4 277.4C26.6 273.4 30.6 271.6 34 273.8C36.4 275.4 37.6 277.4 38.4 279" stroke="#bcc8bc" stroke-width="1.1" fill="none"/>
<path d="M15.6 272.4L28.4 260.6L31.8 264.2L19 276L14 277.2Z" fill="#e4e4e4"/>
<path d="M29 260L30 259.2A1.4 1.4 0 0 1 32 259.4L33.2 260.8A1.4 1.4 0 0 1 33 262.8L32.2 263.6Z" fill="#e4e4e4"/>
<path d="M45.4 285.6H42.4L45.4 282.6Z" fill="#9a9a9a"/>
<!-- measure -->
<rect x="17" y="294.6" width="5.3" height="23" fill="#e4e4e4"/>
<rect x="17" y="314.4" width="20.9" height="3.4" fill="#e4e4e4"/>
<path d="M22.3 304.6A10 10 0 0 1 32 314.4H22.3Z" fill="#aeb6ae"/>
<path d="M22.3 301.6A12.6 12.6 0 0 1 34.6 314.4" stroke="#e4e4e4" stroke-width="1.3" fill="none"/>
<path d="M19.4 297.6H22M19.4 300.6H22M19.4 303.6H22M19.4 306.6H22M19.4 309.6H22M19.4 312.6H22M24.4 314.6V316.4M27.2 314.6V316.4M30 314.6V316.4M32.8 314.6V316.4M35.6 314.6V316.4" stroke="#2a2a2a" stroke-width="0.8"/>
<!-- breakdowner -->
<path d="M14.6 342.6C17.4 347.4 21 350 26 350.6C31 350 34.6 347.4 37.6 342.6" stroke="#d8d8d8" stroke-width="1" fill="none" stroke-dasharray="1.8 1.6"/>
<path d="M14.3 340.6L16 342.3L14.3 344L12.6 342.3Z" fill="#e4e4e4"/><path d="M37.9 340.6L39.6 342.3L37.9 344L36.2 342.3Z" fill="#e4e4e4"/>
<path d="M26 347.4L29.2 350.6L26 353.8L22.8 350.6Z" fill="#d0d0d0"/>
<path d="M45.4 361H42.4L45.4 358Z" fill="#9a9a9a"/>
</svg>
<!--TOOLBAR_END-->
<!--NPANEL_START-->
<div id="tabs"></div>
<svg class="abs" style="left:1052px;top:26px" width="24" height="836" viewBox="1052 26 24 836">
<path d="M1076 28.4H1066A5 5 0 0 0 1061 33.4V66A5 5 0 0 0 1066 71H1076Z" fill="#3a3a3a" stroke="#4a4a4a" stroke-width="0.8"/>
<path d="M1076 73.6H1067A4.5 4.5 0 0 0 1062.5 78.1V110.9A4.5 4.5 0 0 0 1067 115.4H1076Z" fill="#262626" stroke="#343434" stroke-width="0.8"/>
<path d="M1076 118H1067A4.5 4.5 0 0 0 1062.5 122.5V155.9A4.5 4.5 0 0 0 1067 160.4H1076Z" fill="#262626" stroke="#343434" stroke-width="0.8"/>
<path d="M1076 163H1067A4.5 4.5 0 0 0 1062.5 167.5V236.9A4.5 4.5 0 0 0 1067 241.4H1076Z" fill="#262626" stroke="#343434" stroke-width="0.8"/>
<text transform="translate(1071.6 56.4) rotate(-90)" font-size="11" fill="#f4f4f4" font-family="Liberation Sans" letter-spacing="-0.4">Item</text>
<text transform="translate(1071.6 99.2) rotate(-90)" font-size="11" fill="#d0d0d0" font-family="Liberation Sans" letter-spacing="-0.55">Tool</text>
<text transform="translate(1071.6 148.2) rotate(-90)" font-size="11" fill="#d0d0d0" font-family="Liberation Sans" letter-spacing="-0.76">View</text>
<text transform="translate(1071.6 225.2) rotate(-90)" font-size="11" fill="#d0d0d0" font-family="Liberation Sans" letter-spacing="0.13">Animation</text>
</svg>
<div class="pn" style="top:28.4px;height:326px"></div>
<div class="pn" style="top:357.4px;height:185.4px"></div>
<svg class="abs" style="left:846px;top:33px" width="204" height="16" viewBox="0 0 204 16"><path d="M4.6 5.6L8.6 9.8L12.6 5.6" stroke="#d8d8d8" stroke-width="1.2" fill="none"/><rect x="189.0" y="5.4" width="1.3" height="1.3" fill="#8c8c8c"/><rect x="189.0" y="8.4" width="1.3" height="1.3" fill="#8c8c8c"/><rect x="191.9" y="5.4" width="1.3" height="1.3" fill="#8c8c8c"/><rect x="191.9" y="8.4" width="1.3" height="1.3" fill="#8c8c8c"/><rect x="194.8" y="5.4" width="1.3" height="1.3" fill="#8c8c8c"/><rect x="194.8" y="8.4" width="1.3" height="1.3" fill="#8c8c8c"/><rect x="197.7" y="5.4" width="1.3" height="1.3" fill="#8c8c8c"/><rect x="197.7" y="8.4" width="1.3" height="1.3" fill="#8c8c8c"/></svg>
<div class="lbl" style="left:864.7px;top:34px;color:#ebebeb">Transform</div>
<svg class="abs" style="left:846px;top:362.4px" width="204" height="16" viewBox="0 0 204 16"><path d="M4.6 5.6L8.6 9.8L12.6 5.6" stroke="#d8d8d8" stroke-width="1.2" fill="none"/><rect x="189.0" y="5.4" width="1.3" height="1.3" fill="#8c8c8c"/><rect x="189.0" y="8.4" width="1.3" height="1.3" fill="#8c8c8c"/><rect x="191.9" y="5.4" width="1.3" height="1.3" fill="#8c8c8c"/><rect x="191.9" y="8.4" width="1.3" height="1.3" fill="#8c8c8c"/><rect x="194.8" y="5.4" width="1.3" height="1.3" fill="#8c8c8c"/><rect x="194.8" y="8.4" width="1.3" height="1.3" fill="#8c8c8c"/><rect x="197.7" y="5.4" width="1.3" height="1.3" fill="#8c8c8c"/><rect x="197.7" y="8.4" width="1.3" height="1.3" fill="#8c8c8c"/></svg>
<div class="lbl" style="left:863.8px;top:363.4px;color:#ebebeb">Properties</div>
<div class="lbl" style="left:851.3px;top:64px;letter-spacing:0.08px">Location:</div>
<div class="lbl" style="left:851.3px;top:146px;letter-spacing:0.05px">Rotation:</div>
<div class="lbl" style="left:1018.3px;top:146px;color:#ececec">4L</div>
<div class="lbl" style="left:851.3px;top:270px">Scale:</div>
<div class="fld" style="top:81.8px;height:18.1px;border-radius:3px 3px 0 0"><span class="l">X</span><span class="r">0 m</span></div>
<svg class="abs" style="left:1016px;top:84.2px" width="18" height="14" viewBox="0 0 18 14"><path d="M2.8 5.8V4.2A2.5 2.5 0 0 1 7.8 4.2V7" stroke="#c4c4c4" stroke-width="1.05" fill="none"/><rect x="6.9" y="6.6" width="8.6" height="5.8" rx="0.8" stroke="#c4c4c4" stroke-width="1.05" fill="none"/><rect x="10" y="8.6" width="2.2" height="1.7" fill="#c4c4c4"/></svg>
<div class="fld" style="top:101px;height:18.8px;border-radius:0"><span class="l">Y</span><span class="r">-1.4889 m</span></div>
<svg class="abs" style="left:1016px;top:103.4px" width="18" height="14" viewBox="0 0 18 14"><path d="M2.8 5.8V4.2A2.5 2.5 0 0 1 7.8 4.2V7" stroke="#c4c4c4" stroke-width="1.05" fill="none"/><rect x="6.9" y="6.6" width="8.6" height="5.8" rx="0.8" stroke="#c4c4c4" stroke-width="1.05" fill="none"/><rect x="10" y="8.6" width="2.2" height="1.7" fill="#c4c4c4"/></svg>
<div class="fld" style="top:120.9px;height:19.2px;border-radius:0 0 3px 3px"><span class="l">Z</span><span class="r">0 m</span></div>
<svg class="abs" style="left:1016px;top:123.3px" width="18" height="14" viewBox="0 0 18 14"><path d="M2.8 5.8V4.2A2.5 2.5 0 0 1 7.8 4.2V7" stroke="#c4c4c4" stroke-width="1.05" fill="none"/><rect x="6.9" y="6.6" width="8.6" height="5.8" rx="0.8" stroke="#c4c4c4" stroke-width="1.05" fill="none"/><rect x="10" y="8.6" width="2.2" height="1.7" fill="#c4c4c4"/></svg>
<div class="fld" style="top:163.8px;height:18.1px;border-radius:3px 3px 0 0"><span class="l">W</span><span class="r">0.999</span></div>
<svg class="abs" style="left:1016px;top:166.2px" width="18" height="14" viewBox="0 0 18 14"><path d="M2.8 5.8V4.2A2.5 2.5 0 0 1 7.8 4.2V7" stroke="#c4c4c4" stroke-width="1.05" fill="none"/><rect x="6.9" y="6.6" width="8.6" height="5.8" rx="0.8" stroke="#c4c4c4" stroke-width="1.05" fill="none"/><rect x="10" y="8.6" width="2.2" height="1.7" fill="#c4c4c4"/></svg>
<div class="fld" style="top:183.2px;height:18.8px;border-radius:0"><span class="l">X</span><span class="r">0.000</span></div>
<svg class="abs" style="left:1016px;top:185.6px" width="18" height="14" viewBox="0 0 18 14"><path d="M2.8 5.8V4.2A2.5 2.5 0 0 1 7.8 4.2V7" stroke="#c4c4c4" stroke-width="1.05" fill="none"/><rect x="6.9" y="6.6" width="8.6" height="5.8" rx="0.8" stroke="#c4c4c4" stroke-width="1.05" fill="none"/><rect x="10" y="8.6" width="2.2" height="1.7" fill="#c4c4c4"/></svg>
<div class="fld" style="top:203.2px;height:18.6px;border-radius:0"><span class="l">Y</span><span class="r">0.000</span></div>
<svg class="abs" style="left:1016px;top:205.6px" width="18" height="14" viewBox="0 0 18 14"><path d="M2.8 5.8V4.2A2.5 2.5 0 0 1 7.8 4.2V7" stroke="#c4c4c4" stroke-width="1.05" fill="none"/><rect x="6.9" y="6.6" width="8.6" height="5.8" rx="0.8" stroke="#c4c4c4" stroke-width="1.05" fill="none"/><rect x="10" y="8.6" width="2.2" height="1.7" fill="#c4c4c4"/></svg>
<div class="fld" style="top:223px;height:18.8px;border-radius:0 0 3px 3px"><span class="l">Z</span><span class="r">0.000</span></div>
<svg class="abs" style="left:1016px;top:225.4px" width="18" height="14" viewBox="0 0 18 14"><path d="M2.8 5.8V4.2A2.5 2.5 0 0 1 7.8 4.2V7" stroke="#c4c4c4" stroke-width="1.05" fill="none"/><rect x="6.9" y="6.6" width="8.6" height="5.8" rx="0.8" stroke="#c4c4c4" stroke-width="1.05" fill="none"/><rect x="10" y="8.6" width="2.2" height="1.7" fill="#c4c4c4"/></svg>
<div class="fld s2" style="top:288.3px;height:18.6px;border-radius:3px 3px 0 0"><span class="l">X</span><span class="r">1.000</span></div>
<svg class="abs" style="left:1016px;top:290.7px" width="18" height="14" viewBox="0 0 18 14"><path d="M2.8 5.8V4.2A2.5 2.5 0 0 1 7.8 4.2V7" stroke="#c4c4c4" stroke-width="1.05" fill="none"/><rect x="6.9" y="6.6" width="8.6" height="5.8" rx="0.8" stroke="#c4c4c4" stroke-width="1.05" fill="none"/><rect x="10" y="8.6" width="2.2" height="1.7" fill="#c4c4c4"/></svg>
<div class="fld s2" style="top:308px;height:18.3px;border-radius:0"><span class="l">Y</span><span class="r">1.000</span></div>
<svg class="abs" style="left:1016px;top:310.4px" width="18" height="14" viewBox="0 0 18 14"><path d="M2.8 5.8V4.2A2.5 2.5 0 0 1 7.8 4.2V7" stroke="#c4c4c4" stroke-width="1.05" fill="none"/><rect x="6.9" y="6.6" width="8.6" height="5.8" rx="0.8" stroke="#c4c4c4" stroke-width="1.05" fill="none"/><rect x="10" y="8.6" width="2.2" height="1.7" fill="#c4c4c4"/></svg>
<div class="fld s2" style="top:327.4px;height:18.6px;border-radius:0 0 3px 3px"><span class="l">Z</span><span class="r">1.000</span></div>
<svg class="abs" style="left:1016px;top:329.8px" width="18" height="14" viewBox="0 0 18 14"><path d="M2.8 5.8V4.2A2.5 2.5 0 0 1 7.8 4.2V7" stroke="#c4c4c4" stroke-width="1.05" fill="none"/><rect x="6.9" y="6.6" width="8.6" height="5.8" rx="0.8" stroke="#c4c4c4" stroke-width="1.05" fill="none"/><rect x="10" y="8.6" width="2.2" height="1.7" fill="#c4c4c4"/></svg>
<div class="abs" style="left:850.8px;top:246.2px;width:192.6px;height:18.2px;background:#282828;border-radius:3.5px;box-shadow:0 0 0 0.6px #333"></div>
<div class="lbl" style="left:858.3px;top:248.4px;color:#e4e4e4;letter-spacing:-0.04px">Quaternion (WXYZ)</div>
<svg class="abs" style="left:1030px;top:248px" width="14" height="14" viewBox="0 0 14 14"><path d="M3.6 5.6L6.6 8.6L9.6 5.6" stroke="#dcdcdc" stroke-width="1.3" fill="none"/></svg>
<div class="pl" style="top:392.8px;width:80.2px;letter-spacing:0.2px">FK &gt; IK Arm L</div>
<div class="pf" style="top:391.2px">0.000</div>
<div class="pl" style="top:418.0px;width:80.2px;letter-spacing:0.2px">FK &gt; IK Arm R</div>
<div class="pf" style="top:416.4px">0.000</div>
<div class="pl" style="top:443.0px;width:80.2px;letter-spacing:0.2px">FK &gt; IK Leg L</div>
<div class="pf" style="top:441.4px">1.000</div>
<div class="pl" style="top:468.20000000000005px;width:80.2px;letter-spacing:0.2px">FK &gt; IK Leg R</div>
<div class="pf" style="top:466.6px">1.000</div>
<div class="pl" style="top:493.20000000000005px;width:80.2px;letter-spacing:0.08px">IsoRot Arm<span style="margin-left:5.4px">...</span></div>
<div class="pf" style="top:491.6px">1.000</div>
<div class="pl" style="top:518.4px;width:80.2px;letter-spacing:0.08px">IsoRot Arm<span style="margin-left:5.4px">...</span></div>
<div class="pf" style="top:516.8px">1.000</div>
<svg class="abs" style="left:852px;top:376px" width="28" height="16" viewBox="0 0 28 16"><path d="M2.8 8.6L8.2 4.2V7.3H19.8V4.2L25.2 8.6L19.8 13V9.9H8.2V13Z" fill="#fff" stroke="#111" stroke-width="0.8" stroke-linejoin="miter"/></svg>
<!--NPANEL_END-->
<div id="hdr">
<!--HEADER_START-->
<div class="abs" style="left:0;top:0;width:1076px;height:1.5px;background:#1c1c1c"></div>
<!-- editor type -->
<div class="hb" style="left:7px;width:30px"></div>
<svg class="abs" style="left:10px;top:5px" width="28" height="18" viewBox="0 0 28 18">
<g stroke="#dcdcdc" stroke-width="1.2" fill="none"><path d="M1.2 9.6H13.6M0.6 13.2H14.2M4.8 8.2L3.4 16M10 8.2L11.4 16"/></g>
<circle cx="11.6" cy="5.4" r="3.6" fill="#dedede"/><circle cx="12.6" cy="4.4" r="1.5" fill="#fff"/>
<path d="M19 8.3L21.8 11L24.6 8.3" stroke="#dcdcdc" stroke-width="1.3" fill="none"/>
</svg>
<!-- pose mode -->
<div class="hb" style="left:44px;width:108px"></div>
<svg class="abs" style="left:47px;top:5px" width="20" height="18" viewBox="0 0 20 18">
<rect x="2" y="3" width="3.8" height="3.8" fill="#e4e4e4"/>
<circle cx="10.4" cy="3.6" r="1.3" fill="#dcdcdc"/>
<path d="M7.4 6.4H15.6M10.4 5.4V10.2M10.4 10.2L6 16M10.4 10.2L13.6 16" stroke="#dcdcdc" stroke-width="1.1" fill="none"/>
</svg>
<div class="ht" style="left:69.6px;letter-spacing:-0.33px">Pose Mode</div>
<svg class="abs" style="left:140px;top:5px" width="12" height="18" viewBox="0 0 12 18"><path d="M3 8.3L5.8 11L8.6 8.3" stroke="#dcdcdc" stroke-width="1.3" fill="none"/></svg>
<div class="ht" style="left:165.6px">View</div>
<div class="ht" style="left:205.2px">Select</div>
<div class="ht" style="left:250.8px;letter-spacing:-0.35px">Pose</div>
<!-- orientation -->
<div class="hb" style="left:442px;width:78.5px"></div>
<svg class="abs" style="left:444px;top:5px" width="20" height="18" viewBox="0 0 20 18">
<path d="M4.6 13.4V3.2M2.4 5.4L4.6 3L6.8 5.4M4.6 13.4L14.6 13.4M12.2 11.2L14.8 13.4L12.2 15.6M4.6 13.4L10.6 7.4" stroke="#dcdcdc" stroke-width="1.15" fill="none"/>
<circle cx="4.6" cy="13.4" r="1.5" fill="#2a2a2a" stroke="#dcdcdc" stroke-width="1"/>
</svg>
<div class="ht" style="left:467.6px;letter-spacing:-0.2px">Global</div>
<svg class="abs" style="left:508.8px;top:5px" width="12" height="18" viewBox="0 0 12 18"><path d="M3 8.3L5.8 11L8.6 8.3" stroke="#dcdcdc" stroke-width="1.3" fill="none"/></svg>
<!-- pivot -->
<div class="hb" style="left:526.6px;width:30.6px"></div>
<svg class="abs" style="left:528px;top:5px" width="30" height="18" viewBox="0 0 30 18">
<circle cx="8.2" cy="10.6" r="4" stroke="#dcdcdc" stroke-width="1.2" fill="none"/>
<circle cx="11.6" cy="7" r="4.2" stroke="#dcdcdc" stroke-width="1.2" fill="none"/>
<circle cx="8.2" cy="10.8" r="1.5" fill="#dcdcdc"/>
<path d="M20.2 8.3L23 11L25.8 8.3" stroke="#dcdcdc" stroke-width="1.3" fill="none"/>
</svg>
<!-- snap -->
<div class="hb" style="left:563.8px;width:50.6px"></div>
<div class="abs" style="left:564.4px;top:5.6px;width:18.4px;height:16.8px;background:#505050;border-radius:3.5px 0 0 3.5px"></div>
<svg class="abs" style="left:564px;top:5px" width="50" height="18" viewBox="0 0 50 18">
<path d="M-3.3 5.4V-1.2A3.3 3.3 0 0 1 3.3 -1.2V5.4" stroke="#8c8c8c" stroke-width="2.1" fill="none" transform="translate(9.6 9.4) rotate(45)"/>
<path d="M22.2 10.2V14.6M26.6 10.8V14M30.8 10.8V14M35 10.2V14.6M22.2 12.4H35" stroke="#dcdcdc" stroke-width="1.1" fill="none"/>
<rect x="32" y="2.6" width="4" height="4" fill="#e4e4e4"/>
<path d="M41.2 8.3L44 11L46.8 8.3" stroke="#dcdcdc" stroke-width="1.3" fill="none"/>
</svg>
<!-- right side -->
<div class="hb" style="left:825px;width:30px"></div>
<svg class="abs" style="left:825px;top:5px" width="30" height="18" viewBox="0 0 30 18">
<path d="M5.3 5.6C7.6 1.6 13.8 1.6 16.1 5.6C13.8 9.6 7.6 9.6 5.3 5.6Z" fill="#262626" stroke="#e8e8e8" stroke-width="1.7"/>
<circle cx="10.7" cy="5.5" r="1.9" fill="none" stroke="#e8e8e8" stroke-width="1.5"/>
<path d="M1 7.8L10.6 11.2L6.8 12.6L6.4 16.6Z" fill="#ececec" stroke="#262626" stroke-width="0.7"/>
<path d="M21.5 8.3L24.3 11L27.1 8.3" stroke="#dcdcdc" stroke-width="1.3" fill="none"/>
</svg>
<div class="hb" style="left:862px;width:38px;background:#262626"></div>
<div class="abs" style="left:862px;top:5px;width:18.6px;height:18px;background:#4772b3;border-radius:4px 0 0 4px"></div>
<svg class="abs" style="left:862px;top:5px" width="38" height="18" viewBox="0 0 38 18">
<path d="M2.2 4A11.4 11.4 0 0 1 13.6 15.4" stroke="#e6ded0" stroke-width="1.1" fill="none"/>
<path d="M5.4 12.4L14.6 3.6M10.4 2.9H15.3V7.8" stroke="#fff" stroke-width="1.15" fill="none"/>
<circle cx="4" cy="13.7" r="1.8" stroke="#fff" stroke-width="1.1" fill="#4772b3"/>
<path d="M25.6 8.3L28.4 11L31.2 8.3" stroke="#dcdcdc" stroke-width="1.3" fill="none"/>
</svg>
<div class="hb" style="left:907px;width:38px;background:#262626"></div>
<div class="abs" style="left:907px;top:5px;width:18.6px;height:18px;background:#4772b3;border-radius:4px 0 0 4px"></div>
<svg class="abs" style="left:907px;top:5px" width="38" height="18" viewBox="0 0 38 18">
<clipPath id="cOv"><circle cx="12.1" cy="6.7" r="4.4"/></clipPath>
<circle cx="6.8" cy="11.2" r="4.5" fill="none" stroke="#f0f0f0" stroke-width="1.15"/>
<circle cx="12.1" cy="6.7" r="4.4" fill="#ececec"/>
<circle cx="6.8" cy="11.2" r="4.5" fill="none" stroke="#4772b3" stroke-width="1.5" clip-path="url(#cOv)"/>
<path d="M25.3 8.3L28.1 11L30.9 8.3" stroke="#dcdcdc" stroke-width="1.3" fill="none"/>
</svg>
<div class="hb" style="left:952px;width:18px;background:#3a3a3a;border-color:#444"></div>
<svg class="abs" style="left:952px;top:5px" width="18" height="18" viewBox="0 0 18 18">
<path d="M6.6 4.4V3.2H14.6V11.2H13.4" stroke="#5e5e5e" stroke-width="1.1" fill="none"/>
<rect x="3.4" y="6.2" width="8.6" height="8.4" stroke="#5e5e5e" stroke-width="1.1" fill="none"/>
<rect x="5.8" y="8.4" width="1.2" height="1.2" fill="#5e5e5e"/><rect x="8.6" y="8.4" width="1.2" height="1.2" fill="#5e5e5e"/>
</svg>
<div class="hb" style="left:976.6px;width:95.4px;background:#262626"></div>
<div class="abs" style="left:977px;top:5.5px;width:18.4px;height:17px;background:#3e3e3e;border-radius:3.5px 0 0 3.5px"></div>
<div class="abs" style="left:996px;top:5.5px;width:18.4px;height:17px;background:#3e3e3e"></div>
<div class="abs" style="left:1015px;top:5px;width:18.6px;height:18px;background:#4772b3"></div>
<div class="abs" style="left:1034.2px;top:5.5px;width:18.2px;height:17px;background:#3e3e3e"></div>
<svg class="abs" style="left:977px;top:5px" width="95" height="18" viewBox="0 0 95 18">
<g stroke="#d4d4d4" stroke-width="1.1" fill="none"><circle cx="9.2" cy="9" r="6.2"/><ellipse cx="9.2" cy="9" rx="2.9" ry="6.2"/><path d="M3 9H15.4"/></g>
<circle cx="28.2" cy="9" r="6.6" fill="#d2d2d2"/>
<circle cx="47.2" cy="9" r="6.6" fill="#f4f4f4"/>
<path d="M47.2 2.4A6.6 6.6 0 0 0 42.2 13.4L47.2 9Z" fill="#4772b3"/>
<path d="M42.8 13.6L47.2 9.4L53 12A6.6 6.6 0 0 1 42.8 13.6Z" fill="#c8d4ea"/>
<circle cx="66.2" cy="9" r="6.2" stroke="#cfcfcf" stroke-width="1.1" fill="#585858"/>
<path d="M62.4 7.6A4.2 4.2 0 0 1 66.6 4.4" stroke="#eee" stroke-width="1.2" fill="none"/>
<path d="M82.4 8.3L85.2 11L88 8.3" stroke="#dcdcdc" stroke-width="1.3" fill="none"/>
</svg>
<!--HEADER_END-->
</div>
</body>
</html>
